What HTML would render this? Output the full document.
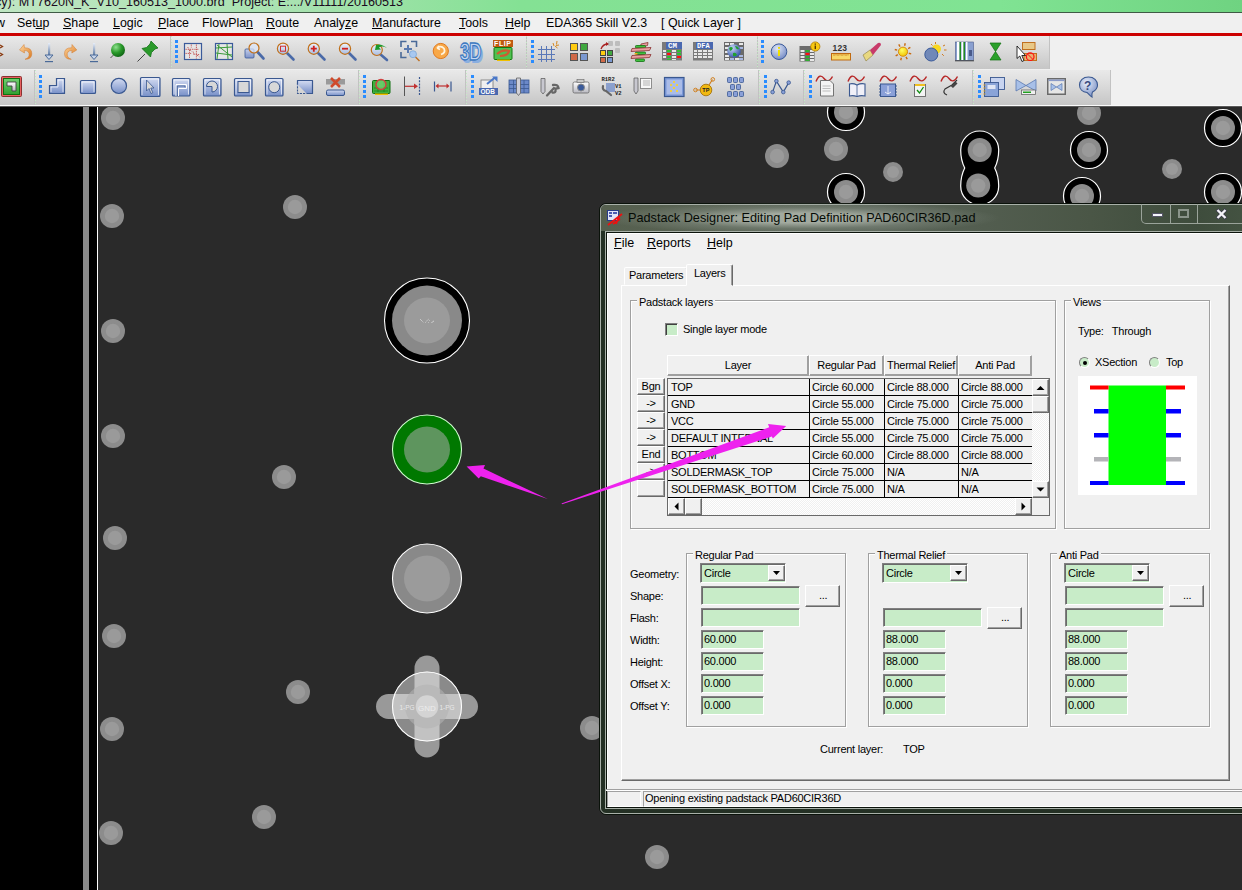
<!DOCTYPE html>
<html><head><meta charset="utf-8">
<style>
*{box-sizing:border-box;margin:0;padding:0}
html,body{width:1242px;height:890px;overflow:hidden;background:#2a2a2a;font-family:"Liberation Sans",sans-serif;position:relative}
.a{position:absolute}
#title{left:0;top:0;width:1242px;height:12px;background:linear-gradient(90deg,#bfe6c2 0px,#a8e2b0 300px,#84e194 520px,#80e393 1000px,#6fd381 1242px)}
#title span{position:absolute;left:-5px;top:-5px;font-size:12.6px;line-height:15px;color:#1a0a20;white-space:pre}
#menu{left:0;top:12px;width:1242px;height:21px;background:#f0f0f0;border-top:1px solid #3f5a45}
#menu span{position:absolute;top:3px;font-size:12.4px;color:#000;white-space:pre}
#menu u{text-decoration:underline;text-underline-offset:1px;text-decoration-thickness:1px}
#red{left:0;top:33px;width:1242px;height:3px;background:#cc0000}
#tb{left:0;top:36px;width:1242px;height:71px;background:#f0f0f0}
.band{position:absolute;background:linear-gradient(#e9e9e9,#dcdcdc 40%,#c6c6c6);border-right:1px solid #c2c2c2}
.sep{position:absolute;width:1px;background:repeating-linear-gradient(#c4ecc4 0 1px,transparent 1px 3px)}
.grip{position:absolute;width:3px;height:23px;background:repeating-linear-gradient(#2a8cff 0 3px,transparent 3px 5px)}
.ic{position:absolute;width:22px;height:22px}
.t{font-size:11px;letter-spacing:-0.25px;color:#000;white-space:pre;line-height:13px}
.a.t{position:absolute}
.dm{font-size:12.5px;color:#000;white-space:pre;line-height:15px}
.dm u{text-decoration:underline;text-underline-offset:1px;text-decoration-thickness:1px}
.gb{border:1px solid #a0a0a0;box-shadow:inset 1px 1px 0 #fff,1px 1px 0 #fff}
.gl{background:#f0f0f0;padding:0 2px;margin-top:2px}
.hc{background:#f0f0f0;border:1px solid;border-color:#fff #a0a0a0 #a0a0a0 #fff;box-shadow:inset -1px -1px 0 #a0a0a0;text-align:center}
.hc{font-size:11px;line-height:13px;padding-top:3px}
.btn{background:#f0f0f0;border:1px solid;border-color:#fff #696969 #696969 #fff;box-shadow:inset -1px -1px 0 #a0a0a0;text-align:center}
.btn{font-size:11px;line-height:13px;padding-top:1px}
.ed{background:#c8ecc8;border:1px solid;border-color:#808080 #fff #fff #808080;box-shadow:inset 1px 1px 0 #6a6a6a}
.rad{width:11px;height:11px;border-radius:6px;background:#c8ecc8;border:1px solid;border-color:#808080 #fff #fff #808080}
#canvas{left:0;top:107px;width:1242px;height:783px;background:#2a2a2a}
</style></head><body>
<div id="title" class="a"><span>cy): MT7620N_K_V10_160513_1000.brd  Project: E:.../V11111/20160513</span></div>
<div id="menu" class="a">
<span style="left:-4px">w</span>
<span style="left:17px">Set<u>u</u>p</span>
<span style="left:63px"><u>S</u>hape</span>
<span style="left:113px"><u>L</u>ogic</span>
<span style="left:158px"><u>P</u>lace</span>
<span style="left:202px">FlowPla<u>n</u></span>
<span style="left:266px"><u>R</u>oute</span>
<span style="left:314px">Analy<u>z</u>e</span>
<span style="left:372px"><u>M</u>anufacture</span>
<span style="left:459px"><u>T</u>ools</span>
<span style="left:505px"><u>H</u>elp</span>
<span style="left:546px">EDA365 Skill V2.3</span>
<span style="left:661px">[ Quick Layer ]</span>
</div>
<div id="red" class="a"></div>
<div id="tb" class="a">
<!--row1 bands-->
<div class="band" style="left:0;top:0;width:171px;height:33px"></div>
<div class="band" style="left:171px;top:0;width:356px;height:33px"></div>
<div class="band" style="left:527px;top:0;width:231px;height:33px"></div>
<div class="band" style="left:758px;top:0;width:292px;height:33px"></div>
<!--row2 bands-->
<div class="band" style="left:0;top:34px;width:35px;height:35px"></div>
<div class="band" style="left:35px;top:34px;width:324px;height:35px"></div>
<div class="band" style="left:359px;top:34px;width:107px;height:35px"></div>
<div class="band" style="left:466px;top:34px;width:293px;height:35px"></div>
<div class="band" style="left:759px;top:34px;width:45px;height:35px"></div>
<div class="band" style="left:804px;top:34px;width:169px;height:35px"></div>
<div class="band" style="left:973px;top:34px;width:138px;height:35px"></div>
<div class="a" style="left:0;top:69px;width:1242px;height:1px;background:#fafafa"></div>
<div class="a" style="left:0;top:70px;width:1242px;height:1px;background:#5a5a5a"></div>
<div class="sep" style="left:171px;top:0;height:33px"></div>
<div class="sep" style="left:526px;top:0;height:33px"></div>
<div class="sep" style="left:757px;top:0;height:33px"></div>
<div class="grip" style="left:175px;top:4px"></div>
<div class="grip" style="left:531px;top:4px"></div>
<div class="grip" style="left:761px;top:4px"></div>
<div class="sep" style="left:35px;top:34px;height:35px"></div>
<div class="sep" style="left:359px;top:34px;height:35px"></div>
<div class="sep" style="left:466px;top:34px;height:35px"></div>
<div class="sep" style="left:759px;top:34px;height:35px"></div>
<div class="sep" style="left:804px;top:34px;height:35px"></div>
<div class="sep" style="left:973px;top:34px;height:35px"></div>
<div class="grip" style="left:39px;top:39px"></div>
<div class="grip" style="left:363px;top:39px"></div>
<div class="grip" style="left:471px;top:39px"></div>
<div class="grip" style="left:764px;top:39px"></div>
<div class="grip" style="left:809px;top:39px"></div>
<div class="grip" style="left:978px;top:39px"></div>
</div>
<svg class="a" style="left:0;top:0" width="1242" height="107">
<defs>
<linearGradient id="gBlue" x1="0" y1="0" x2="0" y2="1"><stop offset="0" stop-color="#c6cfea"/><stop offset="1" stop-color="#7d92c8"/></linearGradient>
<linearGradient id="gOr" x1="0" y1="0" x2="1" y2="1"><stop offset="0" stop-color="#ffd8a0"/><stop offset="1" stop-color="#d87820"/></linearGradient>
<linearGradient id="gArr" x1="0" y1="0" x2="0" y2="1"><stop offset="0" stop-color="#e8eef8"/><stop offset="1" stop-color="#4a6a98"/></linearGradient>
<radialGradient id="gGreen" cx="0.35" cy="0.3" r="0.8"><stop offset="0" stop-color="#8fe08f"/><stop offset="0.5" stop-color="#2a9a2a"/><stop offset="1" stop-color="#0a5a10"/></radialGradient>
<radialGradient id="gInfo" cx="0.4" cy="0.3" r="0.8"><stop offset="0" stop-color="#dfe6f6"/><stop offset="1" stop-color="#6a82c0"/></radialGradient>
<radialGradient id="gGlobe" cx="0.35" cy="0.3" r="0.8"><stop offset="0" stop-color="#c8d8f8"/><stop offset="1" stop-color="#2848a0"/></radialGradient>
<radialGradient id="gSun" cx="0.4" cy="0.35" r="0.7"><stop offset="0" stop-color="#ffff60"/><stop offset="1" stop-color="#f0c000"/></radialGradient>
<linearGradient id="gLens" x1="0" y1="0" x2="0" y2="1"><stop offset="0" stop-color="#f0f4fc"/><stop offset="1" stop-color="#a8bce0"/></linearGradient>
</defs>
<!-- ROW 1 -->
<!-- partial icon at left -->
<path d="M0,45 L2.5,46.5 L0,48 M0,53 L2.5,54.5 L0,56" stroke="#8a3a10" stroke-width="1.3" fill="none"/>
<!-- undo -->
<path d="M24,44.5 L19.5,50 L24.5,53 L24.3,50.5 Q30,50.5 29,56 Q28,58.5 25,59.3 Q31.5,59.5 31.8,54 Q32,47.5 24.5,47.8z" fill="url(#gOr)" stroke="#d07a30" stroke-width="0.5"/>
<!-- down arrow -->
<g><rect x="48" y="43" width="2.2" height="14" fill="url(#gArr)"/><path d="M45,55 L53,55 L49,59.5z" fill="#c8d4e8" stroke="#4a6a98" stroke-width="1"/><rect x="45" y="61" width="8" height="1.2" fill="#4a6a98"/></g>
<!-- redo -->
<path d="M72,44.5 L76.8,50 L71.8,53 L72,50.5 Q66.3,50.5 67.3,56 Q68.3,58.5 71.3,59.3 Q64.8,59.5 64.5,54 Q64.3,47.5 71.8,47.8z" fill="url(#gOr)" stroke="#d07a30" stroke-width="0.5"/>
<!-- down arrow 2 -->
<g><rect x="93" y="43" width="2.2" height="14" fill="url(#gArr)"/><path d="M90,55 L98,55 L94,59.5z" fill="#c8d4e8" stroke="#4a6a98" stroke-width="1"/><rect x="90" y="61" width="8" height="1.2" fill="#4a6a98"/></g>
<!-- green ball -->
<path d="M110.5,58 L114,54.5" stroke="#555" stroke-width="1"/>
<circle cx="118" cy="50" r="7" fill="url(#gGreen)"/>
<!-- pushpin -->
<path d="M137.5,61.5 L145,54" stroke="#444" stroke-width="1"/>
<path d="M151,41 L158,48 L155,49 L151.5,52.5 L150.5,57 L142,48.5 L146.5,47.5 L150,44z" fill="#2a9a2a" stroke="#0a6a10" stroke-width="0.7"/>
<!-- grip & separators row1 -->
<!-- ratsnest -->
<rect x="184.5" y="43.5" width="17" height="16" fill="#e6e6e6" stroke="#3a5a9a" stroke-width="1.2"/>
<path d="M185.5,49.3 H199 M185.5,53.4 H192 M193.5,54 L199.5,54.7 M196.4,44.5 V58.5 M189.5,50 V58.5 M191.3,44.5 V47.5 M187.5,47 L191.5,51.5 M193,51.5 L194,54.5 M197,55 L199.5,57" stroke="#c04848" stroke-width="0.9" stroke-dasharray="1.3,0.9" fill="none"/>
<!-- green grid -->
<rect x="215.5" y="43.5" width="17" height="16" fill="#e6e6e6" stroke="#3a5a9a" stroke-width="1.2"/>
<path d="M216,48 L232,47 M216,53 L232,55 M219,44 L217,59 M227,44 L228,59 M217,45 L232,57" stroke="#3a9a3a" stroke-width="1" fill="none"/>
<!-- zoom fit -->
<rect x="245" y="49" width="9" height="9" rx="1" fill="url(#gBlue)" stroke="#3a5a9a" stroke-width="0.8"/>
<path d="M257.5,52 L263.5,58.5" stroke="#4a6aa8" stroke-width="2.6" stroke-linecap="round"/>
<circle cx="254" cy="48" r="5" fill="rgba(220,230,250,0.7)" stroke="#c0701a" stroke-width="1.2"/>
<!-- zoom window -->
<path d="M286.5,52.5 L293.5,59.5" stroke="#4a6aa8" stroke-width="2.6" stroke-linecap="round"/>
<circle cx="283" cy="48.7" r="5.6" fill="url(#gLens)" stroke="#c0701a" stroke-width="1.2"/>
<rect x="280.5" y="46.2" width="5" height="5" fill="none" stroke="#d03030" stroke-width="1"/>
<!-- zoom in -->
<path d="M317.5,52.5 L324.5,59.5" stroke="#4a6aa8" stroke-width="2.6" stroke-linecap="round"/>
<circle cx="313.8" cy="48.7" r="5.6" fill="url(#gLens)" stroke="#c0701a" stroke-width="1.2"/>
<path d="M310.8,48.7 h6 M313.8,45.7 v6" stroke="#d02020" stroke-width="1.8"/>
<!-- zoom out -->
<path d="M348.5,52.5 L355.5,59.5" stroke="#4a6aa8" stroke-width="2.6" stroke-linecap="round"/>
<circle cx="345" cy="48.7" r="5.6" fill="url(#gLens)" stroke="#c0701a" stroke-width="1.2"/>
<path d="M342,48.7 h6" stroke="#d02020" stroke-width="1.8"/>
<!-- zoom prev -->
<path d="M380,54 L387,60" stroke="#4a6aa8" stroke-width="2.6" stroke-linecap="round"/>
<circle cx="376.8" cy="50" r="5.5" fill="url(#gLens)" stroke="#c0701a" stroke-width="1.2"/>
<path d="M375,50 L376,45 Q381,43 387,48 Q382,45.5 379,47.5 L381,49.5z" fill="#1a9a2a"/>
<!-- zoom world -->
<path d="M401,47 V41.5 H406.5 M411,41.5 H416.5 V47 M401,52 V57.5 H406.5" stroke="#4a6a98" stroke-width="1.6" fill="none"/>
<path d="M404,49 h8 M408,45 v8" stroke="#5a7ab0" stroke-width="2" fill="none"/>
<path d="M415.5,57 L419.5,61" stroke="#c07020" stroke-width="1.5"/>
<circle cx="413" cy="54.2" r="3.5" fill="#a8c8f0" stroke="#6a9ad0" stroke-width="0.6"/>
<!-- redraw -->
<circle cx="440.8" cy="51" r="7.6" fill="#f8a848" stroke="#e07a20" stroke-width="1"/>
<path d="M437,48 Q441,45 444,48.5 Q446,53 441,54.5 M437,48 L439.5,46 M437,48 L440,49.5" stroke="#fff4e0" stroke-width="1.8" fill="none"/>
<!-- 3D -->
<g transform="translate(460,59.5) scale(0.72,1)"><text x="3" y="3" font-family="Liberation Sans" font-weight="bold" font-size="24" fill="#8aaee0" letter-spacing="-1">3D</text><text x="0" y="0" font-family="Liberation Sans" font-weight="bold" font-size="24" fill="#c4d6f2" stroke="#3a78c0" stroke-width="1.3" letter-spacing="-1">3D</text></g>
<!-- FLIP -->
<rect x="493" y="40" width="20" height="7" fill="#c05a10"/>
<text x="494" y="46.2" font-family="Liberation Sans" font-weight="bold" font-size="7" fill="#fff" letter-spacing="0.6">FLIP</text>
<rect x="494" y="47.5" width="18" height="12" rx="1" fill="#50c050" stroke="#107a10" stroke-width="1"/>
<path d="M497,54 Q503,49 509,51 Q508,56 500,56" stroke="#d05a30" stroke-width="2.2" fill="none"/>
<rect x="497" y="59.5" width="13" height="1.5" fill="#f0c000"/>
<!-- grid sparkle -->
<path d="M538,49.5 h17 M538,54.5 h17 M538,59.5 h17 M541.5,46 v16 M546.5,46 v16 M551.5,46 v16" stroke="#5a78b8" stroke-width="1" fill="none"/>
<path d="M553,43 l1,3 M557,41 l-0.5,3.5 M559,45 l-3,0.5 M557.5,48 l-2.5,-2" stroke="#d88a20" stroke-width="1" fill="none"/>
<!-- 4 squares -->
<rect x="570.5" y="43.5" width="7" height="7" fill="#ffcc10" stroke="#555" stroke-width="1"/>
<rect x="580.5" y="43.5" width="7" height="7" fill="#40a840" stroke="#555" stroke-width="1"/>
<rect x="570.5" y="53.5" width="7" height="7" fill="#d06a48" stroke="#555" stroke-width="1"/>
<rect x="580.5" y="53.5" width="7" height="7" fill="#7a98d0" stroke="#555" stroke-width="1"/>
<!-- squares arrow -->
<rect x="608" y="41" width="5" height="5" rx="1" fill="#bdbdbd"/><rect x="615" y="41" width="5" height="5" rx="1" fill="#bdbdbd"/><rect x="615" y="48" width="5" height="5" rx="1" fill="#bdbdbd"/>
<path d="M601,49 Q603,44 608,44" stroke="#a82020" stroke-width="1.3" fill="none"/><path d="M606,42 L609,44 L606,46z" fill="#a82020"/>
<rect x="600.5" y="50.5" width="5" height="5" fill="#ffcc10" stroke="#444" stroke-width="1"/>
<rect x="607.5" y="50.5" width="5" height="5" fill="#40a840" stroke="#444" stroke-width="1"/>
<rect x="600.5" y="57.5" width="5" height="5" fill="#d06a48" stroke="#444" stroke-width="1"/>
<rect x="607.5" y="57.5" width="5" height="5" fill="#7a98d0" stroke="#444" stroke-width="1"/>
<!-- layers -->
<path d="M641,44 L648,42.5 L647.5,45.5 L640.5,47z" fill="#e8a0a0" stroke="#8a3030" stroke-width="0.8"/>
<g fill="#40c040" stroke="#107010" stroke-width="0.8"><rect x="635.5" y="45.5" width="10" height="2.5" rx="0.8"/><rect x="635.5" y="52" width="10" height="2.5" rx="0.8"/><rect x="635.5" y="59" width="9" height="2.5" rx="0.8"/></g>
<path d="M632,48.5 L651,47.5 L649.5,50.5 L631,51.5z" fill="#e8a0a0" stroke="#8a3030" stroke-width="0.8"/>
<rect x="634.5" y="53" width="3" height="1.5" fill="#f0b020"/>
<path d="M632,55.5 L651,54.5 L649.5,57.5 L631,58.5z" fill="#e8a0a0" stroke="#8a3030" stroke-width="0.8"/>
<!-- CM -->
<rect x="662" y="42" width="20" height="18.5" fill="#7a7a7a"/>
<g fill="#e8e8e8"><rect x="663" y="50" width="3" height="2"/><rect x="663" y="53" width="3" height="2"/><rect x="663" y="56" width="3" height="2"/><rect x="672" y="50" width="4" height="2"/><rect x="672" y="53" width="4" height="2"/><rect x="672" y="56" width="4" height="2"/><rect x="672" y="59" width="4" height="1"/></g>
<g fill="#30c030"><rect x="667" y="50" width="4" height="2"/><rect x="667" y="56" width="4" height="2"/><rect x="667" y="59" width="4" height="1"/><rect x="677" y="50" width="4" height="2"/><rect x="677" y="53" width="4" height="2"/></g>
<rect x="667" y="53" width="4" height="2" fill="#ff1010"/><rect x="677" y="56" width="4" height="2" fill="#ff1010"/>
<rect x="666" y="42" width="16" height="7" fill="#4a68b0"/>
<text x="668" y="48.3" font-family="Liberation Mono" font-weight="bold" font-size="7.5" fill="#fff">CM</text>
<!-- DFA -->
<rect x="693" y="42" width="20" height="18.5" fill="#7a7a7a"/>
<g fill="#e8e8e8"><rect x="694" y="50" width="3" height="2"/><rect x="694" y="53" width="3" height="2"/><rect x="694" y="56" width="3" height="2"/><rect x="698" y="50" width="4" height="2"/><rect x="698" y="53" width="4" height="2"/><rect x="698" y="56" width="4" height="2"/><rect x="703" y="50" width="4" height="2"/><rect x="703" y="53" width="4" height="2"/><rect x="703" y="56" width="4" height="2"/><rect x="708" y="50" width="4" height="2"/><rect x="708" y="53" width="4" height="2"/><rect x="708" y="56" width="4" height="2"/></g>
<rect x="696" y="42" width="17" height="7" fill="#4a68b0"/>
<text x="697" y="48.3" font-family="Liberation Mono" font-weight="bold" font-size="7" fill="#fff">DFA</text>
<!-- globe table -->
<rect x="724" y="42" width="20" height="18.5" fill="#6a6a6a"/>
<g fill="#e8e8e8"><rect x="725" y="43" width="4" height="2"/><rect x="730" y="43" width="4" height="2"/><rect x="739" y="43" width="4" height="2"/><rect x="725" y="47" width="4" height="2"/><rect x="725" y="51" width="4" height="2"/><rect x="725" y="55" width="4" height="2"/><rect x="725" y="58" width="4" height="2"/><rect x="735" y="58" width="4" height="2"/></g>
<g fill="#a8b8e0"><rect x="739" y="47" width="4" height="2"/><rect x="739" y="55" width="4" height="2"/><rect x="730" y="58" width="4" height="2"/><rect x="739" y="58" width="4" height="2"/></g>
<circle cx="734" cy="51" r="6.8" fill="url(#gGlobe)"/>
<path d="M729,48 Q731,46 733,48 Q732,51 730,51z M735,46 Q738,46 739,49 Q737,50 736,48z M733,53 Q736,52 737,55 Q735,57 733,56z" fill="#20a030"/>
<!-- info -->
<circle cx="779" cy="51.7" r="7.8" fill="url(#gInfo)" stroke="#3a5a9a" stroke-width="1"/>
<rect x="778" y="47" width="2" height="1.8" fill="#f0e000"/><rect x="778" y="50" width="2" height="6" fill="#f0e000"/>
<!-- table info -->
<rect x="799.5" y="46" width="15" height="15.5" fill="#6a6a6a"/>
<g fill="#e8e8e8"><rect x="800.5" y="50" width="4" height="2"/><rect x="800.5" y="53" width="4" height="2"/><rect x="800.5" y="56" width="4" height="2"/><rect x="800.5" y="59" width="4" height="2"/><rect x="810" y="50" width="4" height="2"/><rect x="810" y="53" width="4" height="2"/><rect x="810" y="56" width="4" height="2"/><rect x="810" y="59" width="4" height="2"/></g>
<g fill="#30b030"><rect x="805.5" y="50" width="4" height="2"/><rect x="805.5" y="56" width="4" height="2"/><rect x="805.5" y="59" width="4" height="2"/></g>
<rect x="805.5" y="53" width="4" height="2" fill="#ff1010"/>
<circle cx="815.3" cy="46.5" r="4.6" fill="#f8c810" stroke="#b07a00" stroke-width="0.8"/>
<rect x="814.6" y="43.5" width="1.4" height="1.2" fill="#5a3a00"/><rect x="814.6" y="45.5" width="1.4" height="3.6" fill="#5a3a00"/>
<!-- 123 ruler -->
<text x="832.5" y="51" font-family="Liberation Sans" font-weight="bold" font-size="8.5" fill="#333" letter-spacing="0.2">123</text>
<rect x="831.5" y="53.5" width="19" height="6.5" fill="#f8d868" stroke="#c06a10" stroke-width="1"/>
<path d="M834,54 v2 M836,54 v1.5 M838,54 v2 M840,54 v1.5 M842,54 v2 M844,54 v1.5 M846,54 v2 M848,54 v1.5" stroke="#c06a10" stroke-width="0.7"/>
<!-- brush -->
<path d="M863,55 L870,50 L873,55 L866,61z" fill="#e8d880" stroke="#8a7a40" stroke-width="0.6"/>
<path d="M870,50 L878,43 Q881,42 881,45 L873,55z" fill="#c83a6a"/>
<!-- sun -->
<circle cx="903" cy="51.7" r="4.6" fill="url(#gSun)" stroke="#d07a00" stroke-width="0.8"/>
<path d="M903,43 v2.5 M903,58 v2.5 M894.5,51.7 h2.5 M909,51.7 h2.5 M897,45.7 l1.8,1.8 M907.2,55.9 l1.8,1.8 M897,57.7 l1.8,-1.8 M907.2,47.5 l1.8,-1.8" stroke="#c86a10" stroke-width="1.4" transform="rotate(15 903 51.7)"/>
<!-- sun ball -->
<circle cx="936.5" cy="49" r="4.5" fill="#f8d820"/>
<path d="M935.5,42 v2 M943,46 l2,-1 M944,50 h2.5 M942,54 l1.8,1.8 M931,44 l1.5,1.5" stroke="#d07a20" stroke-width="1"/>
<circle cx="931.3" cy="54.5" r="6.5" fill="#7088b8" stroke="#3a5a9a" stroke-width="1"/>
<!-- bars -->
<rect x="955.5" y="42" width="18" height="18.5" fill="#8aa0d0" stroke="#4a5a8a" stroke-width="0.6"/>
<rect x="957" y="42" width="2.5" height="18" fill="#fff"/><rect x="959.5" y="42" width="1.5" height="18" fill="#208a20"/>
<rect x="961.5" y="42" width="2" height="18" fill="#fff"/><rect x="963.5" y="42" width="1.5" height="18" fill="#208a20"/>
<rect x="966" y="42" width="1.5" height="18" fill="#fff"/>
<rect x="969" y="50" width="3" height="6" fill="#4a5a8a"/>
<rect x="955" y="60.3" width="19" height="1" fill="#444"/>
<!-- hourglass -->
<path d="M990,43 L1001,43 L995.5,51.5 L1001,60 L990,60 L995.5,51.5z" fill="#2aa02a" stroke="#107010" stroke-width="0.7"/>
<!-- cursor boxes -->
<rect x="1022.5" y="42.5" width="12.5" height="7" fill="#e8c888" stroke="#c07020" stroke-width="1"/>
<rect x="1024" y="53.5" width="12.5" height="7" fill="#e8b070" stroke="#c07020" stroke-width="1"/>
<circle cx="1030.2" cy="56.7" r="3.8" fill="none" stroke="#ff1010" stroke-width="1.2"/>
<path d="M1027.5,54 L1033,59.5" stroke="#ff1010" stroke-width="1"/>
<path d="M1017,46 L1017,58.5 L1019.8,56 L1022,61.5 L1024,60.5 L1021.8,55.5 L1025.5,55.5z" fill="#fff" stroke="#000" stroke-width="0.8"/>
</svg>

<svg class="a" style="left:0;top:0" width="1242" height="107">
<defs>
<linearGradient id="hBlue" x1="0" y1="0" x2="0" y2="1"><stop offset="0" stop-color="#d4dcf2"/><stop offset="1" stop-color="#7890c8"/></linearGradient>
<linearGradient id="hGreen" x1="0" y1="0" x2="0" y2="1"><stop offset="0" stop-color="#70d070"/><stop offset="1" stop-color="#30a030"/></linearGradient>
<linearGradient id="hGray" x1="0" y1="0" x2="0" y2="1"><stop offset="0" stop-color="#ffffff"/><stop offset="1" stop-color="#b8b8c0"/></linearGradient>
<radialGradient id="hHelp" cx="0.4" cy="0.3" r="0.8"><stop offset="0" stop-color="#e8eefa"/><stop offset="1" stop-color="#7088c0"/></radialGradient>
</defs>
<!-- green square w red border -->
<rect x="1.5" y="76.5" width="20" height="20" rx="1" fill="#e86060" stroke="#8a3030" stroke-width="1"/>
<rect x="3.5" y="78.5" width="16" height="16" fill="url(#hGreen)" stroke="#107010" stroke-width="1"/>
<path d="M7,82 L16,82 L16,91 L12,91 L12,86 L7,86z" fill="url(#hGray)" stroke="#444" stroke-width="0.9"/>
<!-- L shape -->
<path d="M49.5,93.5 V85.5 H56.5 V78.5 H64.5 V93.5z" fill="url(#hBlue)" stroke="#3a5890" stroke-width="1.2"/><path d="M51,92 V87 H58 V80 H63 V92" fill="none" stroke="#fff" stroke-opacity="0.75" stroke-width="0.9"/>
<!-- rect -->
<rect x="80.5" y="80.5" width="15" height="13" rx="1" fill="url(#hBlue)" stroke="#3a5890" stroke-width="1.2"/><path d="M82,92 V82 H94 V92" fill="none" stroke="#fff" stroke-opacity="0.75" stroke-width="0.9"/>
<!-- circle -->
<circle cx="118.9" cy="85.9" r="7.6" fill="url(#hBlue)" stroke="#3a5890" stroke-width="1.2"/>
<!-- select -->
<rect x="140.5" y="77.5" width="19.5" height="19" rx="1" fill="url(#hBlue)" stroke="#3a5890" stroke-width="1.2"/><path d="M142,95 V79 H158.5 V95" fill="none" stroke="#fff" stroke-opacity="0.75" stroke-width="0.9"/>
<path d="M146.5,80 L146.5,91 L149,88.5 L151,93.5 L152.8,92.7 L150.8,88 L154,88z" fill="#d8d8d8" stroke="#3a5890" stroke-width="0.8"/>
<!-- shape4 -->
<rect x="172.5" y="78.5" width="17.5" height="17.5" rx="1" fill="url(#hBlue)" stroke="#3a5890" stroke-width="1.2"/><path d="M174,94.5 V80 H188.5 V94.5" fill="none" stroke="#fff" stroke-opacity="0.75" stroke-width="0.9"/>
<path d="M176,96 V84.5 H186.5 V88.5 H178.5 V96" fill="none" stroke="#fff" stroke-width="1"/>
<path d="M177.3,96 V86 H185 V87.3" fill="none" stroke="#3a5890" stroke-width="0.8"/>
<!-- arc shape -->
<rect x="203.5" y="78.5" width="17.5" height="17.5" rx="1" fill="url(#hBlue)" stroke="#3a5890" stroke-width="1.2"/><path d="M205,94.5 V80 H219.5 V94.5" fill="none" stroke="#fff" stroke-opacity="0.75" stroke-width="0.9"/>
<path d="M206.5,86.5 A5.5,5.5 0 1 1 212,92 V86.5z" fill="#d8d8d8" stroke="#3a5890" stroke-width="1"/>
<!-- rect icon -->
<rect x="234.5" y="78.5" width="17.5" height="17.5" rx="1" fill="url(#hBlue)" stroke="#3a5890" stroke-width="1.2"/><path d="M236,94.5 V80 H250.5 V94.5" fill="none" stroke="#fff" stroke-opacity="0.75" stroke-width="0.9"/>
<rect x="238" y="81.5" width="11" height="11" fill="#d8d8d8" stroke="#3a5890" stroke-width="1"/>
<!-- circle icon -->
<rect x="265.5" y="78.5" width="17.5" height="17.5" rx="1" fill="url(#hBlue)" stroke="#3a5890" stroke-width="1.2"/><path d="M267,94.5 V80 H281.5 V94.5" fill="none" stroke="#fff" stroke-opacity="0.75" stroke-width="0.9"/>
<circle cx="274.2" cy="87.2" r="5.5" fill="#d8d8d8" stroke="#3a5890" stroke-width="1"/>
<!-- triangle -->
<path d="M297.5,83 V93.5 H306" fill="none" stroke="#3a5890" stroke-width="1.1" stroke-dasharray="2.2,1"/>
<path d="M297.5,84.5 V80.5 H312.5 V93.5 H306.5z" fill="url(#hBlue)"/><path d="M297.5,84.5 V80.5 H312.5 V93.5 H306.5" fill="none" stroke="#3a5890" stroke-width="1.2" stroke-linejoin="round"/>
<!-- delete -->
<rect x="326" y="79" width="19" height="5.5" fill="#9a9a9a"/>
<path d="M331,78 L340,87 M340,78 L331,87" stroke="#d04a2a" stroke-width="2.6"/>
<rect x="326.5" y="90" width="18" height="5.5" rx="1.5" fill="url(#hBlue)" stroke="#3a5890" stroke-width="1"/>
<!-- board red circle -->
<rect x="372.5" y="80.5" width="17.5" height="13" rx="1" fill="#40b040" stroke="#107010" stroke-width="1"/>
<path d="M374,88 h14 M374,91 h14 M378,82 v10 M384,82 v10" stroke="#107a10" stroke-width="0.6"/>
<rect x="375" y="93.5" width="13" height="1.5" fill="#f0c000"/>
<circle cx="381" cy="84.5" r="5" fill="#80e080" fill-opacity="0.6" stroke="#d04040" stroke-width="1.5"/>
<!-- dimension -->
<path d="M404.5,76.5 V96" stroke="#555" stroke-width="1"/>
<path d="M419.5,77 V96" stroke="#3a5890" stroke-width="1.2" stroke-dasharray="2,1.2"/>
<path d="M405,86.3 H415" stroke="#c03030" stroke-width="1.2"/><path d="M414,83.5 L418,86.3 L414,89z" fill="#c03030"/>
<!-- measure -->
<path d="M434.5,81.5 V91.5 M451,81.5 V91.5" stroke="#3a5890" stroke-width="1.2"/>
<path d="M437,86 H448" stroke="#c03030" stroke-width="1.2"/><path d="M438.5,83.5 L435.5,86 L438.5,88.5z M446.5,83.5 L449.5,86 L446.5,88.5z" fill="#c03030"/>
<!-- ODB -->
<rect x="481" y="80" width="12" height="10" fill="#f0f0f0" stroke="#777" stroke-width="0.8"/>
<path d="M487,84 L495,77.5" stroke="#4a78c8" stroke-width="2"/><path d="M492,76.5 H497.5 V82z" fill="#4a78c8"/>
<rect x="479" y="88" width="19" height="7" fill="#4a68b0"/>
<text x="480.5" y="94" font-family="Liberation Sans" font-weight="bold" font-size="6.5" fill="#fff">ODB</text>
<!-- via grid -->
<rect x="509" y="80" width="20" height="13" fill="#6a88c8" stroke="#3a5890" stroke-width="0.8"/>
<path d="M509,84.5 h20 M509,88.5 h20 M513.5,80 v13 M524,80 v13" stroke="#3a5890" stroke-width="0.8"/>
<path d="M516.5,78 h4 v15 l-2,2.5 l-2,-2.5z" fill="#d0d0d8" stroke="#555" stroke-width="0.7"/>
<!-- wrench drill -->
<path d="M541,78.5 h4 v13 l-2,2.5 l-2,-2.5z" fill="#c8c8d0" stroke="#555" stroke-width="0.7"/>
<path d="M547,95.5 L554,88 M553,85 Q558,84 558.5,88 L556,88.5 L555.5,90 Q556,93 552.5,92.5" stroke="#666" stroke-width="2.3" fill="none" stroke-linecap="round"/>
<!-- camera -->
<rect x="573" y="82" width="16" height="11" rx="1.5" fill="url(#hGray)" stroke="#666" stroke-width="0.8"/>
<rect x="577" y="79.5" width="7" height="3" fill="#c8c8c8" stroke="#666" stroke-width="0.6"/>
<circle cx="581" cy="87.5" r="3.5" fill="#3a5a9a" stroke="#888" stroke-width="1"/>
<!-- R1R2 -->
<text x="601.5" y="81" font-family="Liberation Mono" font-weight="bold" font-size="5.5" fill="#222">R1R2</text>
<text x="615" y="87.5" font-family="Liberation Mono" font-weight="bold" font-size="5.5" fill="#222">V1</text>
<text x="615" y="95" font-family="Liberation Mono" font-weight="bold" font-size="5.5" fill="#222">V2</text>
<rect x="606" y="83" width="9" height="9" fill="#6a88c8" opacity="0.7"/>
<path d="M603,86 Q602,90 606,91 L611,95" stroke="#666" stroke-width="2.2" fill="none" stroke-linecap="round"/>
<!-- drill list -->
<path d="M634,78 h4 v13 l-2,3 l-2,-3z" fill="#c8c8d0" stroke="#555" stroke-width="0.7"/>
<rect x="640.5" y="78.5" width="11" height="10" fill="#f8f8f8" stroke="#777" stroke-width="0.8"/>
<path d="M643,81 h7 M643,83 h7 M643,85 h7" stroke="#888" stroke-width="0.6"/>
<!-- blue board -->
<rect x="664.5" y="77.5" width="19.5" height="19" fill="#7a98d8" stroke="#3a5890" stroke-width="1.2"/>
<rect x="666.5" y="79.5" width="15.5" height="15" fill="#aabce8"/>
<g fill="#f0d040"><rect x="673" y="81" width="2" height="2"/><rect x="670" y="84" width="2" height="2"/><rect x="676" y="84" width="2" height="2"/><rect x="673" y="87" width="2" height="2"/><rect x="670" y="90" width="2" height="2"/><rect x="676" y="90" width="2" height="2"/></g>
<!-- TP -->
<path d="M695.5,90 H701 M709,85 L712.5,79.5" stroke="#d08020" stroke-width="1.2"/>
<circle cx="695.5" cy="90" r="1.8" fill="none" stroke="#d08020" stroke-width="1"/>
<circle cx="712.8" cy="79.4" r="1.8" fill="none" stroke="#d08020" stroke-width="1"/>
<circle cx="706" cy="90" r="5.8" fill="#f0b810" stroke="#a06a00" stroke-width="0.8"/>
<text x="702.3" y="92.3" font-family="Liberation Sans" font-weight="bold" font-size="5.5" fill="#222">TP</text>
<!-- squares pattern -->
<g fill="#8aa0d8" stroke="#3a5890" stroke-width="0.8"><rect x="727.5" y="77.5" width="4" height="5" rx="0.8"/><rect x="733.5" y="77.5" width="4" height="5" rx="0.8"/><rect x="739.5" y="77.5" width="4" height="5" rx="0.8"/><rect x="730.5" y="84.5" width="4" height="5" rx="0.8"/><rect x="736.5" y="84.5" width="4" height="5" rx="0.8"/><rect x="727.5" y="91.5" width="4" height="5" rx="0.8"/><rect x="733.5" y="91.5" width="4" height="5" rx="0.8"/><rect x="739.5" y="91.5" width="4" height="5" rx="0.8"/></g>
<!-- nodes -->
<path d="M772.6,92.1 L776.4,81.1 L783.3,92.1 L788.7,82.6" stroke="#3a5890" stroke-width="1.2" fill="none"/>
<g fill="#8aa0d8" stroke="#3a5890" stroke-width="0.8"><circle cx="772.6" cy="92.1" r="1.8"/><circle cx="776.4" cy="81.1" r="1.8"/><circle cx="783.3" cy="92.1" r="1.8"/><circle cx="788.7" cy="82.6" r="1.8"/></g>
<!-- red waves -->
<g stroke="#b82828" stroke-width="1.4" fill="none">
<path d="M816,81.5 C818.5,75 821.5,75 824,78.5 S829.5,82 832.5,76.5"/>
<path d="M848,81.5 C850.5,75 853.5,75 856,78.5 S861.5,82 864.5,76.5"/>
<path d="M880,81.5 C882.5,75 885.5,75 888,78.5 S893.5,82 896.5,76.5"/>
<path d="M910,81.5 C912.5,75 915.5,75 918,78.5 S923.5,82 926.5,76.5"/>
<path d="M941,81.5 C943.5,75 946.5,75 949,78.5 S954.5,82 957.5,76.5"/>
</g>
<!-- doc -->
<path d="M820.5,80.5 H830 L833.5,84 V96 H820.5z" fill="#f4f4f4" stroke="#666" stroke-width="0.9"/>
<path d="M822.5,86 h8 M822.5,88.5 h8 M822.5,91 h8" stroke="#999" stroke-width="0.6"/>
<!-- book -->
<path d="M849.5,84 Q853,83 857,85 Q861,83 865,84 V96 Q861,95 857,96.5 Q853,95 849.5,96z" fill="#f0f0f8" stroke="#3a5890" stroke-width="1.1"/>
<path d="M857,85 V96.5" stroke="#3a5890" stroke-width="0.8"/>
<!-- chip -->
<rect x="880.5" y="84" width="15" height="12.5" fill="#8aa0d8" stroke="#3a5890" stroke-width="1"/>
<path d="M879,86 h2 M879,89 h2 M879,92 h2 M879,95 h2 M895,86 h2 M895,89 h2 M895,92 h2 M895,95 h2" stroke="#3a5890" stroke-width="1"/>
<path d="M888,86 V94 M885,92 L888,94 L891,92" stroke="#fff" stroke-width="0.8" fill="none"/>
<!-- check -->
<rect x="914.5" y="84.5" width="11" height="12" fill="#f4f4f4" stroke="#666" stroke-width="0.9"/>
<rect x="915" y="84" width="10" height="2" fill="#f0c020"/>
<path d="M917,90 L919.5,93 L923.5,87" stroke="#108a10" stroke-width="1.3" fill="none"/>
<!-- probe -->
<path d="M947,95 Q942,93 945,89 L952,85 M952,85 L957,80" stroke="#333" stroke-width="1.2" fill="none"/>
<path d="M951,86.5 L955.5,81.5 L957.5,83.5 L953,88z" fill="#444"/>
<!-- notebooks -->
<rect x="990.5" y="77.5" width="14" height="12" fill="#c8d4f0" stroke="#3a5890" stroke-width="0.9"/>
<rect x="984.5" y="82.5" width="14" height="14" fill="#8aa4d8" stroke="#3a5890" stroke-width="0.9"/>
<rect x="987.5" y="85" width="8" height="4" fill="#e0e6f4"/>
<path d="M983.5,85 h2 M983.5,88 h2 M983.5,91 h2 M983.5,94 h2" stroke="#d8a020" stroke-width="1.2"/>
<!-- bowtie -->
<path d="M1016,79.5 L1026,85.5 L1036,79.5 V91 L1026,85.5 L1016,91z" fill="#a8c0e8" stroke="#5a78b0" stroke-width="0.8"/>
<rect x="1021.5" y="90" width="14" height="4.5" fill="#f0f0f0" stroke="#666" stroke-width="0.8"/>
<rect x="1023" y="91.5" width="8" height="1.5" fill="#20a020"/>
<!-- window -->
<rect x="1047.75" y="78.75" width="17.5" height="15.5" fill="#e6e6e6" stroke="#6a6a6a" stroke-width="1.5"/>
<rect x="1048.5" y="79.5" width="16" height="1.6" fill="#8a9ac8"/>
<path d="M1051,83.5 L1056.5,87 L1062,83.5 V90.5 L1056.5,87 L1051,90.5z" fill="#a8c0e8" stroke="#5a78b0" stroke-width="0.7"/>
<!-- help -->
<path d="M1088.5,77 C1083,77 1079.5,80.5 1079.5,85 C1079.5,89 1082.5,92 1087,92.5 C1089,94 1090,96 1092,97 C1091.5,95 1092,93 1092.5,92 C1095.5,90.5 1097.5,88 1097.5,85 C1097.5,80.5 1094,77 1088.5,77z" fill="url(#hHelp)" stroke="#3a5890" stroke-width="1.1"/>
<text x="1084" y="89.5" font-family="Liberation Sans" font-weight="bold" font-size="12" fill="#3a4a80">?</text>
</svg>

<div id="canvas" class="a">
<svg width="1242" height="783" style="position:absolute;left:0;top:0">
<rect x="0" y="0" width="83" height="783" fill="#000"/>
<rect x="83" y="0" width="6" height="783" fill="#8a8a8a"/>
<rect x="89" y="0" width="8" height="783" fill="#000"/>
<rect x="97" y="0" width="1" height="783" fill="#fff"/>
<g transform="translate(0,-107)">
<circle cx="113" cy="118" r="12" fill="#8c8c8c"/><circle cx="113" cy="118" r="7.2" fill="#9a9a9a"/>
<circle cx="112" cy="216" r="12" fill="#8c8c8c"/><circle cx="112" cy="216" r="7.2" fill="#9a9a9a"/>
<circle cx="295" cy="207" r="12" fill="#8c8c8c"/><circle cx="295" cy="207" r="7.2" fill="#9a9a9a"/>
<circle cx="113" cy="331" r="12" fill="#8c8c8c"/><circle cx="113" cy="331" r="7.2" fill="#9a9a9a"/>
<circle cx="113" cy="436" r="12" fill="#8c8c8c"/><circle cx="113" cy="436" r="7.2" fill="#9a9a9a"/>
<circle cx="284" cy="477" r="12" fill="#8c8c8c"/><circle cx="284" cy="477" r="7.2" fill="#9a9a9a"/>
<circle cx="115" cy="538" r="12" fill="#8c8c8c"/><circle cx="115" cy="538" r="7.2" fill="#9a9a9a"/>
<circle cx="114" cy="636" r="12" fill="#8c8c8c"/><circle cx="114" cy="636" r="7.2" fill="#9a9a9a"/>
<circle cx="298" cy="692" r="12" fill="#8c8c8c"/><circle cx="298" cy="692" r="7.2" fill="#9a9a9a"/>
<circle cx="112" cy="729" r="12" fill="#8c8c8c"/><circle cx="112" cy="729" r="7.2" fill="#9a9a9a"/>
<circle cx="264" cy="817" r="12" fill="#8c8c8c"/><circle cx="264" cy="817" r="7.2" fill="#9a9a9a"/>
<circle cx="111" cy="833" r="12" fill="#8c8c8c"/><circle cx="111" cy="833" r="7.2" fill="#9a9a9a"/>
<circle cx="592" cy="728" r="12" fill="#8c8c8c"/><circle cx="592" cy="728" r="7.2" fill="#9a9a9a"/>
<circle cx="657" cy="857" r="12" fill="#8c8c8c"/><circle cx="657" cy="857" r="7.2" fill="#9a9a9a"/>
<circle cx="777" cy="156" r="12" fill="#8c8c8c"/><circle cx="777" cy="156" r="7.2" fill="#9a9a9a"/>
<circle cx="836" cy="149" r="12" fill="#8c8c8c"/><circle cx="836" cy="149" r="7.2" fill="#9a9a9a"/>
<circle cx="1089" cy="113" r="12" fill="#8c8c8c"/><circle cx="1089" cy="113" r="7.2" fill="#9a9a9a"/>
<circle cx="893" cy="172" r="10" fill="#8c8c8c"/><circle cx="893" cy="172" r="6" fill="#9a9a9a"/>
<circle cx="1172" cy="169" r="10" fill="#8c8c8c"/><circle cx="1172" cy="169" r="6" fill="#9a9a9a"/>
<path d="M979.7,150 m-19,0 a19,19 0 0 1 38,0 q0,10 -4,18 q4,8 4,18 a19,19 0 0 1 -38,0 q0,-10 4,-18 q-4,-8 -4,-18z" fill="#000" stroke="#fff" stroke-width="1.2"/>
<circle cx="979.7" cy="150" r="12" fill="#8c8c8c"/><circle cx="979.7" cy="150" r="7.2" fill="#9a9a9a"/>
<circle cx="978.2" cy="185.6" r="12" fill="#8c8c8c"/><circle cx="978.2" cy="185.6" r="7.2" fill="#9a9a9a"/>
<circle cx="846" cy="112" r="18.5" fill="#000" stroke="#fff" stroke-width="1.2"/><circle cx="846" cy="112" r="12" fill="#8c8c8c"/><circle cx="846" cy="112" r="7.2" fill="#9a9a9a"/>
<circle cx="846" cy="192" r="18.5" fill="#000" stroke="#fff" stroke-width="1.2"/><circle cx="846" cy="192" r="12" fill="#8c8c8c"/><circle cx="846" cy="192" r="7.2" fill="#9a9a9a"/>
<circle cx="1089" cy="150" r="18.5" fill="#000" stroke="#fff" stroke-width="1.2"/><circle cx="1089" cy="150" r="12" fill="#8c8c8c"/><circle cx="1089" cy="150" r="7.2" fill="#9a9a9a"/>
<circle cx="1082" cy="196" r="18.5" fill="#000" stroke="#fff" stroke-width="1.2"/><circle cx="1082" cy="196" r="12" fill="#8c8c8c"/><circle cx="1082" cy="196" r="7.2" fill="#9a9a9a"/>
<circle cx="1223" cy="128" r="18.5" fill="#000" stroke="#fff" stroke-width="1.2"/><circle cx="1223" cy="128" r="12" fill="#8c8c8c"/><circle cx="1223" cy="128" r="7.2" fill="#9a9a9a"/>
<circle cx="1223" cy="192" r="18.5" fill="#000" stroke="#fff" stroke-width="1.2"/><circle cx="1223" cy="192" r="12" fill="#8c8c8c"/><circle cx="1223" cy="192" r="7.2" fill="#9a9a9a"/>
<circle cx="427" cy="320.5" r="42.5" fill="#000" stroke="#fff" stroke-width="1.1"/><circle cx="427" cy="320.5" r="35" fill="#898989"/><circle cx="427" cy="320.5" r="23" fill="#9b9b9b"/><path d="M420,319 L423.5,322.5 M425.5,322.5 L427,320.5 L428.5,319.3 M429.5,320.5 L430,320.5 M428.5,322.5 L429,322.5 M431.5,322.5 L433,322.3 L433.5,320" stroke="#dcdcdc" stroke-width="1" fill="none" stroke-dasharray="1,0.8"/>
<circle cx="427" cy="449.5" r="34.5" fill="#007800" stroke="#d0ffd0" stroke-width="1.1"/><circle cx="427" cy="449.5" r="23" fill="#5e955e"/>
<circle cx="427" cy="578.5" r="34.5" fill="#898989" stroke="#fff" stroke-width="1.1"/><circle cx="427" cy="578.5" r="23" fill="#9b9b9b"/>
<rect x="414.5" y="655.5" width="25" height="102" rx="12.5" fill="#999"/>
<rect x="376" y="694.0" width="102" height="25" rx="12.5" fill="#999"/>
<circle cx="427" cy="706.5" r="35" fill="#8a8a8a"/><circle cx="427" cy="706.5" r="22" fill="#a2a2a2"/>
<clipPath id="tc"><circle cx="427" cy="706.5" r="35"/></clipPath><clipPath id="tc2"><circle cx="427" cy="706.5" r="22"/></clipPath>
<g clip-path="url(#tc)"><rect x="414.5" y="655.5" width="25" height="102" fill="#c2c2c2"/><rect x="376" y="694.0" width="102" height="25" fill="#c2c2c2"/></g>
<g clip-path="url(#tc2)"><rect x="414.5" y="655.5" width="25" height="102" fill="#b9b9b9"/><rect x="376" y="694.0" width="102" height="25" fill="#b9b9b9"/></g>
<circle cx="427" cy="706.5" r="11.3" fill="#d4d4d4"/><circle cx="427" cy="706.5" r="34.5" fill="none" stroke="#fff" stroke-width="1.1"/>
<text x="427" y="710.5" font-size="8" fill="#ececec" text-anchor="middle" font-family="Liberation Sans">GND</text><text x="407" y="710" font-size="6.5" fill="#e8e8e8" text-anchor="middle" font-family="Liberation Sans">1-PG</text><text x="447" y="710" font-size="6.5" fill="#e8e8e8" text-anchor="middle" font-family="Liberation Sans">1-PG</text>
</g>
</svg>
</div>
<div id="dlg" class="a" style="left:0;top:0;width:1242px;height:890px;pointer-events:none">
<!-- frame -->
<div class="a" style="left:599px;top:203px;width:700px;height:612px;border:1px solid #0a120a;border-radius:7px"></div>
<div class="a" style="left:600px;top:204px;width:700px;height:610px;border:1px solid #a8b0a8;border-radius:6px;background:#243024"></div>
<div class="a" style="left:601px;top:205px;width:700px;height:26px;border-radius:5px 0 0 0;background:linear-gradient(90deg,#56604f 0,#5a6458 40%,#4a5646 70%,#3e4c3c 85%,#4a5a48 100%)"></div>
<!-- title glow -->
<div class="a" style="left:600px;top:203px;width:400px;height:30px;background:radial-gradient(ellipse 200px 16px at 50% 50%,rgba(175,182,172,0.85) 30%,rgba(140,150,140,0.4) 65%,rgba(90,100,90,0) 100%)"></div>
<!-- title icon -->
<svg class="a" style="left:607px;top:210px" width="16" height="16" viewBox="0 0 16 16">
<rect x="0.5" y="0.5" width="11" height="10" fill="#dfe2f6" stroke="#283c8a"/>
<rect x="2" y="2" width="3" height="2" fill="#4a5ab0"/><rect x="6" y="2" width="4" height="2" fill="#4a5ab0"/><rect x="2" y="5" width="3" height="2" fill="#4a5ab0"/>
<path d="M1,15 L15,4 M6,14 L13,9 M9,14 L12,7" stroke="#ee1010" stroke-width="1.8" fill="none"/>
</svg>
<div class="a" style="left:628px;top:211px;font-size:12.7px;color:#050a05;white-space:pre">Padstack Designer: Editing Pad Definition PAD60CIR36D.pad</div>
<!-- caption buttons -->
<div class="a" style="left:1141px;top:204px;width:120px;height:20px;border:1px solid #9aa39a;border-top:none;border-radius:0 0 0 5px"></div>
<div class="a" style="left:1170px;top:204px;width:1px;height:19px;background:#9aa39a"></div>
<div class="a" style="left:1197px;top:204px;width:1px;height:19px;background:#9aa39a"></div>
<div class="a" style="left:1152px;top:213px;width:11px;height:4px;background:#f4f4fa;border:1px solid #556"></div>
<div class="a" style="left:1178px;top:209px;width:11px;height:9px;border:2px solid #8a948a"></div>
<svg class="a" style="left:1214px;top:207px" width="16" height="14"><path d="M3,2.5 L12,11.5 M12,2.5 L3,11.5" stroke="#3a3a4a" stroke-width="3.6"/><path d="M3.5,3 L11.5,11 M11.5,3 L3.5,11" stroke="#f4f4f8" stroke-width="2.4"/></svg>
<!-- client -->
<div class="a" style="left:605px;top:231px;width:700px;height:578px;border:1px solid #a8b0a8;border-right:none"></div>
<div class="a" style="left:606px;top:232px;width:700px;height:576px;border:1px solid #0c140c;border-right:none"></div>
<div class="a" style="left:607px;top:233px;width:700px;height:574px;background:#f0f0f0;border:1px solid #fff;border-right:none"></div>
<!-- dialog menu -->
<div class="a dm" style="left:614px;top:236px"><u>F</u>ile</div>
<div class="a dm" style="left:647px;top:236px"><u>R</u>eports</div>
<div class="a dm" style="left:707px;top:236px"><u>H</u>elp</div>
<!-- tab panel -->
<div class="a" style="left:621px;top:285px;width:609px;height:496px;border:1px solid;border-color:#fff #696969 #696969 #fff;box-shadow:inset -1px -1px 0 #a0a0a0"></div>
<div class="a" style="left:624px;top:267px;width:63px;height:18px;z-index:0;border:1px solid;border-color:#fff #a0a0a0 transparent #fff;border-radius:2px 2px 0 0;background:#f0f0f0"></div>
<div class="a t" style="left:629px;top:269px">Parameters</div>
<div class="a" style="left:686px;top:264px;width:47px;height:22px;border:1px solid;border-color:#fff #696969 transparent #fff;box-shadow:inset -1px 0 0 #a0a0a0;border-radius:2px 2px 0 0;background:#f0f0f0"></div>
<div class="a t" style="left:694px;top:267px">Layers</div>
<!-- groupboxes -->
<div class="a gb" style="left:630px;top:300px;width:426px;height:229px"></div>
<div class="a t gl" style="left:637px;top:294px">Padstack layers</div>
<div class="a gb" style="left:1064px;top:300px;width:146px;height:229px"></div>
<div class="a t gl" style="left:1071px;top:294px">Views</div>
<!-- checkbox -->
<div class="a" style="left:665px;top:323px;width:13px;height:13px;background:#c8ecc8;border:1px solid;border-color:#808080 #fff #fff #808080;box-shadow:inset 1px 1px 0 #404040"></div>
<div class="a t" style="left:683px;top:323px">Single layer mode</div>
<!-- grid header -->
<div class="a" style="left:667px;top:354px;width:366px;height:21px;background:#f0f0f0"></div>

<div class="a hc" style="left:667px;top:355px;width:142px;height:21px"><span class="t">Layer</span></div>
<div class="a hc" style="left:809px;top:355px;width:75px;height:21px"><span class="t">Regular Pad</span></div>
<div class="a hc" style="left:884px;top:355px;width:74px;height:21px"><span class="t">Thermal Relief</span></div>
<div class="a hc" style="left:958px;top:355px;width:74px;height:21px"><span class="t">Anti Pad</span></div>
<div class="a" style="left:667px;top:378px;width:383px;height:138px;border:1px solid #696969;background:#f0f0f0"></div>
<div class="a t" style="left:671px;top:381px">TOP</div>
<div class="a t" style="left:812px;top:381px">Circle 60.000</div>
<div class="a t" style="left:887px;top:381px">Circle 88.000</div>
<div class="a t" style="left:961px;top:381px">Circle 88.000</div>
<div class="a" style="left:668px;top:395px;width:364px;height:1px;background:#000"></div>
<div class="a btn" style="left:637px;top:378px;width:28px;height:17px"><span class="t">Bgn</span></div>
<div class="a t" style="left:671px;top:398px">GND</div>
<div class="a t" style="left:812px;top:398px">Circle 55.000</div>
<div class="a t" style="left:887px;top:398px">Circle 75.000</div>
<div class="a t" style="left:961px;top:398px">Circle 75.000</div>
<div class="a" style="left:668px;top:412px;width:364px;height:1px;background:#000"></div>
<div class="a btn" style="left:637px;top:395px;width:28px;height:17px"><span class="t">-></span></div>
<div class="a t" style="left:671px;top:415px">VCC</div>
<div class="a t" style="left:812px;top:415px">Circle 55.000</div>
<div class="a t" style="left:887px;top:415px">Circle 75.000</div>
<div class="a t" style="left:961px;top:415px">Circle 75.000</div>
<div class="a" style="left:668px;top:429px;width:364px;height:1px;background:#000"></div>
<div class="a btn" style="left:637px;top:412px;width:28px;height:17px"><span class="t">-></span></div>
<div class="a t" style="left:671px;top:432px">DEFAULT INTERNAL</div>
<div class="a t" style="left:812px;top:432px">Circle 55.000</div>
<div class="a t" style="left:887px;top:432px">Circle 75.000</div>
<div class="a t" style="left:961px;top:432px">Circle 75.000</div>
<div class="a" style="left:668px;top:446px;width:364px;height:1px;background:#000"></div>
<div class="a btn" style="left:637px;top:429px;width:28px;height:17px"><span class="t">-></span></div>
<div class="a t" style="left:671px;top:449px">BOTTOM</div>
<div class="a t" style="left:812px;top:449px">Circle 60.000</div>
<div class="a t" style="left:887px;top:449px">Circle 88.000</div>
<div class="a t" style="left:961px;top:449px">Circle 88.000</div>
<div class="a" style="left:668px;top:463px;width:364px;height:1px;background:#000"></div>
<div class="a btn" style="left:637px;top:446px;width:28px;height:17px"><span class="t">End</span></div>
<div class="a t" style="left:671px;top:466px">SOLDERMASK_TOP</div>
<div class="a t" style="left:812px;top:466px">Circle 75.000</div>
<div class="a t" style="left:887px;top:466px">N/A</div>
<div class="a t" style="left:961px;top:466px">N/A</div>
<div class="a" style="left:668px;top:480px;width:364px;height:1px;background:#000"></div>
<div class="a btn" style="left:637px;top:463px;width:28px;height:17px"><span class="t">-></span></div>
<div class="a t" style="left:671px;top:483px">SOLDERMASK_BOTTOM</div>
<div class="a t" style="left:812px;top:483px">Circle 75.000</div>
<div class="a t" style="left:887px;top:483px">N/A</div>
<div class="a t" style="left:961px;top:483px">N/A</div>
<div class="a" style="left:668px;top:497px;width:364px;height:1px;background:#000"></div>
<div class="a btn" style="left:637px;top:480px;width:28px;height:17px"><span class="t"></span></div>
<div class="a" style="left:809px;top:379px;width:1px;height:119px;background:#000"></div>
<div class="a" style="left:884px;top:379px;width:1px;height:119px;background:#000"></div>
<div class="a" style="left:958px;top:379px;width:1px;height:119px;background:#000"></div>
<div class="a" style="left:1032px;top:379px;width:17px;height:119px;background:repeating-conic-gradient(#f0f0f0 0 25%,#fff 0 50%) 0 0/2px 2px"></div>
<div class="a btn" style="left:1032px;top:379px;width:17px;height:17px"><svg width="15" height="15" style="position:absolute;left:0;top:0"><path d="M3.5,10 L7.5,6 L11.5,10z" fill="#000"/></svg></div>
<div class="a btn" style="left:1032px;top:396px;width:17px;height:17px"></div>
<div class="a btn" style="left:1032px;top:481px;width:17px;height:17px"><svg width="15" height="15" style="position:absolute;left:0;top:0"><path d="M3.5,5.5 L7.5,9.5 L11.5,5.5z" fill="#000"/></svg></div>
<div class="a" style="left:668px;top:498px;width:364px;height:17px;background:repeating-conic-gradient(#f0f0f0 0 25%,#fff 0 50%) 0 0/2px 2px"></div>
<div class="a btn" style="left:668px;top:498px;width:17px;height:17px"><svg width="15" height="15" style="position:absolute;left:0;top:0"><path d="M9.5,3.5 L5.5,7.5 L9.5,11.5z" fill="#000"/></svg></div>
<div class="a btn" style="left:685px;top:498px;width:17px;height:17px"></div>
<div class="a btn" style="left:1015px;top:498px;width:17px;height:17px"><svg width="15" height="15" style="position:absolute;left:0;top:0"><path d="M5.5,3.5 L9.5,7.5 L5.5,11.5z" fill="#000"/></svg></div>
<div class="a" style="left:1032px;top:498px;width:17px;height:17px;background:#f0f0f0"></div>
<div class="a t" style="left:1078px;top:325px;white-space:pre">Type:   Through</div>
<div class="a rad" style="left:1079px;top:357px"><div style="position:absolute;left:3px;top:3px;width:4px;height:4px;border-radius:2px;background:#000"></div></div>
<div class="a t" style="left:1095px;top:356px">XSection</div>
<div class="a rad" style="left:1149px;top:357px"></div>
<div class="a t" style="left:1166px;top:356px">Top</div>
<svg class="a" style="left:1078px;top:376px" width="119" height="119">
<rect width="119" height="119" fill="#fff"/>
<rect x="30.5" y="9.5" width="57.5" height="99.5" fill="#00ff00"/>
<rect x="12" y="9.5" width="18.5" height="4" fill="#ff0000"/><rect x="88" y="9.5" width="19" height="4" fill="#ff0000"/>
<rect x="16" y="33" width="14.5" height="4.5" fill="#0000ff"/><rect x="88" y="33" width="15" height="4.5" fill="#0000ff"/>
<rect x="16" y="57" width="14.5" height="4.5" fill="#0000ff"/><rect x="88" y="57" width="15" height="4.5" fill="#0000ff"/>
<rect x="16" y="81" width="14.5" height="4.5" fill="#b4b4b8"/><rect x="88" y="81" width="15" height="4.5" fill="#b4b4b8"/>
<rect x="12" y="105" width="18.5" height="4" fill="#0000ff"/><rect x="88" y="105" width="19" height="4" fill="#0000ff"/>
</svg>
<div class="a gb" style="left:686px;top:553px;width:160px;height:174px"></div>
<div class="a t gl" style="left:693px;top:547px">Regular Pad</div>
<div class="a gb" style="left:868px;top:553px;width:160px;height:174px"></div>
<div class="a t gl" style="left:875px;top:547px">Thermal Relief</div>
<div class="a gb" style="left:1050px;top:553px;width:160px;height:174px"></div>
<div class="a t gl" style="left:1057px;top:547px">Anti Pad</div>
<div class="a t" style="left:630px;top:568px">Geometry:</div>
<div class="a t" style="left:630px;top:590px">Shape:</div>
<div class="a t" style="left:630px;top:612px">Flash:</div>
<div class="a t" style="left:630px;top:634px">Width:</div>
<div class="a t" style="left:630px;top:656px">Height:</div>
<div class="a t" style="left:630px;top:678px">Offset X:</div>
<div class="a t" style="left:630px;top:700px">Offset Y:</div>
<div class="a ed" style="left:700px;top:563px;width:86px;height:20px"><span class="t" style="position:absolute;left:3px;top:3px">Circle</span></div><div class="a btn" style="left:768px;top:565px;width:17px;height:16px"><svg width="15" height="14" style="position:absolute;left:0;top:0"><path d="M4,5 L11,5 L7.5,9z" fill="#000"/></svg></div>
<div class="a ed" style="left:701px;top:586px;width:99px;height:19px"><span class="t" style="position:absolute;left:2px;top:2px"></span></div>
<div class="a btn" style="left:805px;top:585px;width:35px;height:22px"><span class="t" style="position:absolute;left:13px;top:3px">...</span></div>
<div class="a ed" style="left:701px;top:608px;width:99px;height:19px"><span class="t" style="position:absolute;left:2px;top:2px"></span></div>
<div class="a ed" style="left:701px;top:630px;width:63px;height:19px"><span class="t" style="position:absolute;left:2px;top:2px">60.000</span></div>
<div class="a ed" style="left:701px;top:652px;width:63px;height:19px"><span class="t" style="position:absolute;left:2px;top:2px">60.000</span></div>
<div class="a ed" style="left:701px;top:674px;width:63px;height:19px"><span class="t" style="position:absolute;left:2px;top:2px">0.000</span></div>
<div class="a ed" style="left:701px;top:696px;width:63px;height:19px"><span class="t" style="position:absolute;left:2px;top:2px">0.000</span></div>
<div class="a ed" style="left:883px;top:630px;width:63px;height:19px"><span class="t" style="position:absolute;left:2px;top:2px">88.000</span></div>
<div class="a ed" style="left:883px;top:652px;width:63px;height:19px"><span class="t" style="position:absolute;left:2px;top:2px">88.000</span></div>
<div class="a ed" style="left:883px;top:674px;width:63px;height:19px"><span class="t" style="position:absolute;left:2px;top:2px">0.000</span></div>
<div class="a ed" style="left:883px;top:696px;width:63px;height:19px"><span class="t" style="position:absolute;left:2px;top:2px">0.000</span></div>
<div class="a ed" style="left:1065px;top:630px;width:63px;height:19px"><span class="t" style="position:absolute;left:2px;top:2px">88.000</span></div>
<div class="a ed" style="left:1065px;top:652px;width:63px;height:19px"><span class="t" style="position:absolute;left:2px;top:2px">88.000</span></div>
<div class="a ed" style="left:1065px;top:674px;width:63px;height:19px"><span class="t" style="position:absolute;left:2px;top:2px">0.000</span></div>
<div class="a ed" style="left:1065px;top:696px;width:63px;height:19px"><span class="t" style="position:absolute;left:2px;top:2px">0.000</span></div>
<div class="a ed" style="left:882px;top:563px;width:86px;height:20px"><span class="t" style="position:absolute;left:3px;top:3px">Circle</span></div><div class="a btn" style="left:950px;top:565px;width:17px;height:16px"><svg width="15" height="14" style="position:absolute;left:0;top:0"><path d="M4,5 L11,5 L7.5,9z" fill="#000"/></svg></div>
<div class="a ed" style="left:883px;top:608px;width:99px;height:19px"><span class="t" style="position:absolute;left:2px;top:2px"></span></div>
<div class="a btn" style="left:987px;top:607px;width:35px;height:22px"><span class="t" style="position:absolute;left:13px;top:3px">...</span></div>
<div class="a ed" style="left:1064px;top:563px;width:86px;height:20px"><span class="t" style="position:absolute;left:3px;top:3px">Circle</span></div><div class="a btn" style="left:1132px;top:565px;width:17px;height:16px"><svg width="15" height="14" style="position:absolute;left:0;top:0"><path d="M4,5 L11,5 L7.5,9z" fill="#000"/></svg></div>
<div class="a ed" style="left:1065px;top:586px;width:99px;height:19px"><span class="t" style="position:absolute;left:2px;top:2px"></span></div>
<div class="a btn" style="left:1169px;top:585px;width:35px;height:22px"><span class="t" style="position:absolute;left:13px;top:3px">...</span></div>
<div class="a ed" style="left:1065px;top:608px;width:99px;height:19px"><span class="t" style="position:absolute;left:2px;top:2px"></span></div>
<div class="a t" style="left:820px;top:743px">Current layer:</div>
<div class="a t" style="left:903px;top:743px">TOP</div>
<div class="a" style="left:606px;top:789px;width:700px;height:1px;background:#a0a0a0"></div>
<div class="a" style="left:606px;top:790px;width:700px;height:1px;background:#fff"></div>
<div class="a" style="left:607px;top:791px;width:34px;height:16px;border:1px solid;border-color:#a0a0a0 #fff #fff #a0a0a0"></div>
<div class="a" style="left:643px;top:791px;width:700px;height:16px;border:1px solid;border-color:#a0a0a0 #fff #fff #a0a0a0"></div>
<div class="a t" style="left:645px;top:792px">Opening existing padstack PAD60CIR36D</div>
</div>
<svg class="a" style="left:0;top:0" width="1242" height="890">
<path d="M466.6,466.4 L485,465 L483.5,468.6 L547.8,499 L480.8,476.2 L478.7,478.5z" fill="#ee22ee"/>
<path d="M561.5,503.6 L769.2,427.3 L768,424 L786.2,426.1 L772.9,438.6 L771.8,436.6 L562,504.2z" fill="#ee22ee"/>
</svg>
</body></html>
